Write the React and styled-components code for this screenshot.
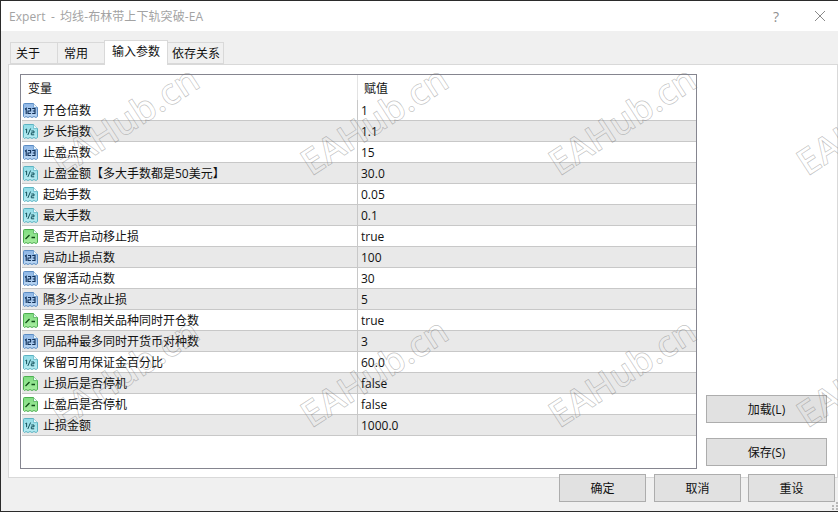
import styled, { createGlobalStyle } from "styled-components";

const PARAMS = [
  { name: "开仓倍数", value: "1", type: "int" },
  { name: "步长指数", value: "1.1", type: "double" },
  { name: "止盈点数", value: "15", type: "int" },
  { name: "止盈金额【多大手数都是50美元】", value: "30.0", type: "double" },
  { name: "起始手数", value: "0.05", type: "double" },
  { name: "最大手数", value: "0.1", type: "double" },
  { name: "是否开启动移止损", value: "true", type: "bool" },
  { name: "启动止损点数", value: "100", type: "int" },
  { name: "保留活动点数", value: "30", type: "int" },
  { name: "隔多少点改止损", value: "5", type: "int" },
  { name: "是否限制相关品种同时开仓数", value: "true", type: "bool" },
  { name: "同品种最多同时开货币对种数", value: "3", type: "int" },
  { name: "保留可用保证金百分比", value: "60.0", type: "double" },
  { name: "止损后是否停机", value: "false", type: "bool" },
  { name: "止盈后是否停机", value: "false", type: "bool" },
  { name: "止损金额", value: "1000.0", type: "double" },
];

const TABS = [
  { label: "关于", width: 48, pad: 5 },
  { label: "常用", width: 48, pad: 6 },
  { label: "输入参数", width: 64, pad: 7, active: true },
  { label: "依存关系", width: 57, pad: 4 },
];

const MARKS = [
  [64, 144],
  [313, 144],
  [561, 144],
  [809, 144],
  [64, 396],
  [313, 396],
  [561, 396],
  [809, 396],
];

const ICON_COLORS = {
  int: { top: "#8db6e6", bottom: "#bcd7f3", line: "#5a8cc4", ink: "#0f2f57" },
  double: { top: "#8fdbe6", bottom: "#b8ecf2", line: "#5bb3c2", ink: "#14525c" },
  bool: { top: "#7fdc80", bottom: "#a8eda0", line: "#4cae50", ink: "#0d4a14" },
};

// Document shape with a folded corner and a torn bottom edge
const TypeIcon = ({ type }) => {
  const c = ICON_COLORS[type];
  const id = `grad-${type}`;
  return (
    <svg width="17" height="17" viewBox="0 0 17 17">
      <defs>
        <linearGradient id={id} x1="0" y1="0" x2="0" y2="1">
          <stop offset="0" stopColor={c.top} />
          <stop offset="1" stopColor={c.bottom} />
        </linearGradient>
      </defs>
      <path
        d="M1.5 2.5 Q1.5 1.5 2.5 1.5 H11.5 L15.5 5.5 V14.5 L14 15.5 L12 14.5 L10 15.5 L8 14.5 L6 15.5 L4 14.5 L2.5 15.5 L1.5 14.5 Z"
        fill={`url(#${id})`}
        stroke={c.line}
      />
      <path d="M11.5 1.5 V5.5 H15.5" fill="#eef8fb" stroke={c.line} strokeWidth="0.7" />
      {type === "int" && (
        <path
          d="M3 7.2 L4.2 6.4 V12 M6 6.5 H8.6 V9 H6 V11.5 H8.9 M10.2 6.5 H13 V11.5 H10.2 M10.8 9 H13"
          fill="none"
          stroke={c.ink}
          strokeWidth="1.1"
        />
      )}
      {type === "double" && (
        <path
          d="M3.4 6.6 L4.6 6 V10.2 M5.8 12 L8.6 5.5 M9.3 8 H12 V9.8 H9.3 V11.8 H12.2"
          fill="none"
          stroke={c.ink}
          strokeWidth="1"
        />
      )}
      {type === "bool" && (
        <path d="M3.5 11 L7.5 7 M9.5 9.5 H13" fill="none" stroke={c.ink} strokeWidth="1.3" />
      )}
    </svg>
  );
};

const App = () => (
  <Dialog>
    <GlobalStyle />
    <TitleBar>
      <Title>Expert - 均线-布林带上下轨突破-EA</Title>
      <HelpGlyph>?</HelpGlyph>
      <CloseIcon width="12" height="12" viewBox="0 0 12 12">
        <path d="M1 1 L11 11 M11 1 L1 11" stroke="#8a8a8a" strokeWidth="1" fill="none" />
      </CloseIcon>
    </TitleBar>
    <Body>
      <TabStrip>
        {TABS.map((tab) => (
          <Tab key={tab.label} $active={tab.active} $width={tab.width} $pad={tab.pad}>
            {tab.label}
          </Tab>
        ))}
      </TabStrip>
      <Panel>
        <Table>
          <HeaderRow>
            <HeaderName>变量</HeaderName>
            <HeaderValue>赋值</HeaderValue>
          </HeaderRow>
          {PARAMS.map((p, i) => (
            <Row key={p.name} $odd={i % 2 === 1}>
              <NameCell>
                <TypeIcon type={p.type} />
                <span>{p.name}</span>
              </NameCell>
              <ValueCell>{p.value}</ValueCell>
            </Row>
          ))}
        </Table>
        <SideButtons>
          <Button $wide>加载(L)</Button>
          <Button $wide>保存(S)</Button>
        </SideButtons>
      </Panel>
      <Footer>
        <Button>确定</Button>
        <Button>取消</Button>
        <Button>重设</Button>
      </Footer>
    </Body>
    <Grip width="6" height="8" viewBox="0 0 6 8">
      <path d="M4 0h2v2H4zM0 3h2v2H0zM4 3h2v2H4zM0 6h2v2H0zM4 6h2v2H4z" fill="#b8b8b8" />
    </Grip>
    {MARKS.map(([x, y]) => (
      <Watermark key={`${x}-${y}`} style={{ left: x, top: y }}>
        EAHub.cn
      </Watermark>
    ))}
  </Dialog>
);

const GlobalStyle = createGlobalStyle`
  html, body {
    margin: 0;
    padding: 0;
    background: #f0f0f0;
  }
  * {
    box-sizing: border-box;
  }
`;

const Dialog = styled.div`
  position: relative;
  width: 838px;
  height: 512px;
  overflow: hidden;
  display: flex;
  flex-direction: column;
  border: 1px solid #2b2b2b;
  border-right: 0;
  font-family: "Open Sans", "Noto Sans CJK SC", sans-serif;
  font-size: 12px;
  color: #111;
  background: #f0f0f0;
`;

const TitleBar = styled.div`
  height: 30px;
  flex: none;
  display: flex;
  align-items: center;
  padding: 0 12px 0 8px;
  background: #fff;
`;

const Title = styled.div`
  flex: 1;
  color: #a3a3a3;
  font-size: 12px;
  word-spacing: 2px;
  letter-spacing: 0.08px;
`;

const HelpGlyph = styled.span`
  margin-right: 35px;
  color: #8f8f8f;
  font-size: 14px;
`;

const CloseIcon = styled.svg`
  display: block;
`;

const Body = styled.div`
  flex: 1;
  display: flex;
  flex-direction: column;
  padding: 11px 0 0 7px;
`;

const TabStrip = styled.div`
  height: 22px;
  flex: none;
  display: flex;
  align-items: flex-end;
  padding-left: 2px;
  position: relative;
  z-index: 1;
`;

const Tab = styled.div`
  width: ${({ $width }) => $width}px;
  height: ${({ $active }) => ($active ? "25px" : "22px")};
  margin-bottom: ${({ $active }) => ($active ? "-1px" : "0")};
  padding-left: ${({ $pad }) => $pad}px;
  padding-bottom: ${({ $active }) => ($active ? "5px" : "0")};
  display: flex;
  align-items: center;
  flex: none;
  background: ${({ $active }) => ($active ? "#fff" : "#f0f0f0")};
  border: 1px solid #d9d9d9;
  border-bottom: ${({ $active }) => ($active ? "0" : "1px solid #d9d9d9")};
  margin-right: -1px;
`;

const Panel = styled.div`
  height: 414px;
  flex: none;
  display: flex;
  padding: 9px 0 0 11px;
  background: #fff;
  border: 1px solid #d9d9d9;
`;

const Table = styled.div`
  width: 677px;
  height: 395px;
  flex: none;
  border: 1px solid #85858f;
  padding-left: 1px;
`;

const HeaderRow = styled.div`
  height: 25px;
  display: flex;
  align-items: center;
`;

const HeaderName = styled.div`
  width: 335px;
  padding-left: 6px;
`;

const HeaderValue = styled.div`
  padding-left: 6px;
  height: 100%;
  display: flex;
  align-items: center;
  border-left: 1px solid #e3e3e3;
`;

const Row = styled.div`
  height: 21px;
  display: flex;
  align-items: center;
  background: ${({ $odd }) => ($odd ? "#e9e9e9" : "#fff")};
  border-bottom: 1px solid #c8c8c8;
`;

const NameCell = styled.div`
  width: 335px;
  height: 100%;
  display: flex;
  align-items: center;
  gap: 4px;
`;

const ValueCell = styled.div`
  height: 100%;
  display: flex;
  align-items: center;
  padding-left: 3px;
  border-left: 1px solid #c8c8c8;
`;

const SideButtons = styled.div`
  margin-left: 9px;
  padding-top: 321px;
  display: flex;
  flex-direction: column;
  gap: 15px;
`;

const Button = styled.div`
  width: ${({ $wide }) => ($wide ? "121px" : "87px")};
  height: 28px;
  flex: none;
  display: flex;
  align-items: center;
  justify-content: center;
  background: #e1e1e1;
  border: 1px solid #adadad;
`;

const Footer = styled.div`
  margin-top: -4px;
  display: flex;
  justify-content: flex-end;
  gap: 7px;
  padding-right: 3px;
  position: relative;

  & > :first-child {
    margin-right: 1px;
  }
`;

const Grip = styled.svg`
  position: absolute;
  right: 0;
  bottom: 1px;
`;

const Watermark = styled.div`
  position: absolute;
  pointer-events: none;
  font-family: "Open Sans", sans-serif;
  font-size: 36px;
  font-weight: 600;
  line-height: 1;
  white-space: nowrap;
  color: transparent;
  -webkit-text-stroke: 0.7px rgba(110, 110, 110, 0.42);
  transform: rotate(-33deg);
  transform-origin: left bottom;
`;

export default App;
